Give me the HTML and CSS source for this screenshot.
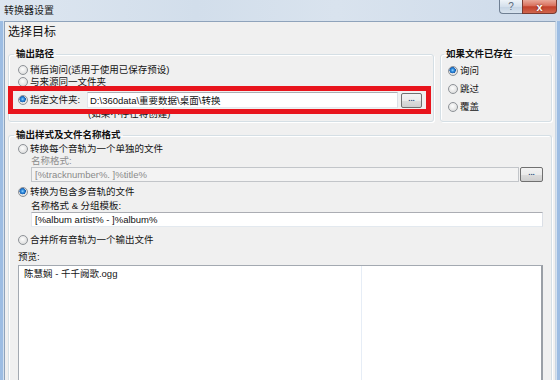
FILE: index.html
```html
<!DOCTYPE html>
<html lang="zh-CN">
<head>
  <meta charset="UTF-8">
  <meta name="viewport" content="width=device-width, initial-scale=1.0">
  <title>转换器设置</title>
  <link rel="stylesheet" href="styles.css">
</head>
<body>
  <div class="window">
    <div class="titlebar">
      <span class="title">转换器设置</span>
      <div class="caption">
        <span class="cap-btn help">?</span>
        <span class="cap-btn close">x</span>
      </div>
    </div>

    <div class="client">
      <h1>选择目标</h1>

      <div class="top-row">
        <fieldset class="group output-path">
          <legend>输出路径</legend>
          <label class="opt"><span class="radio"></span>稍后询问(适用于使用已保存预设)</label>
          <label class="opt"><span class="radio"></span>与来源同一文件夹</label>
          <div class="opt folder-row">
            <span class="radio on"></span>
            <span class="folder-label">指定文件夹:</span>
            <input class="field" type="text" value="D:\360data\重要数据\桌面\转换">
            <button class="browse">...</button>
            <span class="highlight"></span>
          </div>
          <div class="note">(如果不存在将创建)</div>
        </fieldset>

        <fieldset class="group if-exists">
          <legend>如果文件已存在</legend>
          <label class="opt"><span class="radio on"></span>询问</label>
          <label class="opt"><span class="radio"></span>跳过</label>
          <label class="opt"><span class="radio"></span>覆盖</label>
        </fieldset>
      </div>

      <fieldset class="group output-format">
        <legend>输出样式及文件名称格式</legend>
        <label class="opt"><span class="radio"></span>转换每个音轨为一个单独的文件</label>
        <div class="sub-label disabled">名称格式:</div>
        <div class="field-row">
          <input class="field small" type="text" value="[%tracknumber%. ]%title%" disabled>
          <button class="browse small">...</button>
        </div>

        <label class="opt multi"><span class="radio on"></span>转换为包含多音轨的文件</label>
        <div class="sub-label">名称格式 &amp; 分组模板:</div>
        <div class="field-row">
          <input class="field small" type="text" value="[%album artist% - ]%album%">
        </div>

        <label class="opt merge"><span class="radio"></span>合并所有音轨为一个输出文件</label>
        <div class="preview-label">预览:</div>
        <div class="preview">
          <div class="preview-col">陈慧娴 - 千千阙歌.ogg</div>
          <div class="preview-col rest"></div>
        </div>
      </fieldset>
    </div>
  </div>
</body>
</html>
```

FILE: styles.css
```css
* {
  box-sizing: border-box;
}
body {
  margin: 0;
  width: 560px;
  height: 380px;
  overflow: hidden;
  background: #a8c6e9;
  font-family: "Liberation Sans", "Noto Sans CJK SC", sans-serif;
  font-size: 9.5px;
  color: #141414;
}
.window {
  height: 100%;
  display: flex;
  flex-direction: column;
  background: linear-gradient(90deg, #9dbde3 0, #9dbde3 3px, #d3e1f0 3px, #d3e1f0 4px, transparent 4px),
              linear-gradient(270deg, #9dbde3 0, #9dbde3 3px, #d3e1f0 3px, #d3e1f0 4px, transparent 4px);
}

/* title bar */
.titlebar {
  height: 21px;
  flex: none;
  display: flex;
  justify-content: space-between;
  align-items: flex-start;
  padding: 0 3px 0 4px;
  background: linear-gradient(90deg, #dde6f0 0%, #d2deeb 35%, #d9e3ee 60%, #cddaea 100%);
}
.title {
  line-height: 21px;
  font-size: 10px;
  color: #222;
}
.caption {
  display: flex;
}
.cap-btn {
  height: 14px;
  display: flex;
  align-items: center;
  justify-content: center;
  border: 1px solid #6f7f93;
  border-top: none;
}
.help {
  width: 23px;
  border-radius: 0 0 0 4px;
  border-right: none;
  background: linear-gradient(#eef3f8, #d5e0ec 50%, #c4d3e3 51%, #d8e3ee);
  color: #59687a;
  font-size: 10px;
}
.close {
  width: 35px;
  border-radius: 0 0 4px 0;
  border-color: #7a3a30;
  background: linear-gradient(#e9a99a, #d9705c 45%, #c2402a 52%, #d0664e);
  color: #fff;
  font-weight: bold;
  font-size: 11px;
  text-shadow: 0 0 2px #5a1a10;
}

/* client area */
.client {
  flex: 1;
  min-height: 0;
  display: flex;
  flex-direction: column;
  margin: 0 4px;
  padding: 0 3px;
  background: #f0f0f0;
  border-top: 1px solid #8fa3bb;
  border-left: 1px solid #8fa3bb;
  border-right: 1px solid #c9d6e4;
}
h1 {
  margin: 3px 0 9px;
  font-size: 12px;
  line-height: 14px;
  font-weight: normal;
  color: #111;
}

/* group boxes */
.group {
  margin: 0;
  min-width: 0;
  border: 1px solid #d5dfe5;
  border-radius: 3px;
  box-shadow: inset 1px 1px 0 #fff, 1px 1px 0 #fff;
}
.group legend {
  margin-left: -4px;
  padding: 0 2px;
  line-height: 12px;
  font-weight: bold;
  color: #111;
}
.top-row {
  display: flex;
  gap: 6px;
}
.output-path {
  width: 426px;
  flex: none;
  padding: 4px 11px 1px 9px;
}
.if-exists {
  flex: 1;
  padding: 2px 4px 0 7px;
}
.if-exists .opt {
  height: 18px;
}
.opt {
  display: flex;
  align-items: center;
  height: 12px;
  line-height: 12px;
}
.radio {
  flex: none;
  width: 10px;
  height: 10px;
  margin-right: 2px;
  border-radius: 50%;
  border: 1px solid #8e9297;
  background: radial-gradient(circle at 45% 40%, #fdfdfd 0, #e6e6e6 55%, #cfd0d2 100%);
}
.radio.on {
  background: radial-gradient(circle at 45% 40%, #9fd6ff 0, #2f8ee0 1.5px, #1b5fae 3px, transparent 3.4px),
              radial-gradient(circle at 45% 40%, #fdfdfd 0, #e6e6e6 55%, #cfd0d2 100%);
}
.folder-row {
  position: relative;
  height: 16px;
  margin-top: 4px;
}
.folder-label {
  width: 57px;
  flex: none;
}
.field {
  height: 16px;
  flex: 1;
  min-width: 0;
  padding: 0 2px;
  font: inherit;
  color: #111;
  background: #fff;
  border: 1px solid;
  border-color: #abadb3 #dbdfe6 #e3e9ef #e2e3ea;
  outline: none;
}
.field.small {
  height: 15px;
  padding: 0 3px;
}
.field:disabled {
  background: #f3f3f3;
  color: #8a8a8a;
  border-color: #c2c5c9;
}
.browse {
  flex: none;
  width: 21px;
  height: 15px;
  margin-left: 3px;
  padding: 0 0 3px;
  border: 1px solid #707070;
  border-radius: 2px;
  background: linear-gradient(#f2f2f2 0%, #ebebeb 50%, #dddddd 51%, #cfcfcf 100%);
  font: bold 8px "Liberation Sans", sans-serif;
  color: #2b4a7a;
  line-height: 8px;
}
.browse.small {
  width: 23px;
  margin-left: 1px;
}
.highlight {
  position: absolute;
  left: -10px;
  top: -6px;
  right: -9px;
  bottom: -6px;
  border: 5px solid #e8141c;
}
.note {
  margin-left: 70px;
  line-height: 12px;
  height: 12px;
}

/* output format group */
.output-format {
  flex: 1;
  min-height: 0;
  display: flex;
  flex-direction: column;
  margin-top: 7px;
  padding: 1px 8px 0 9px;
  border-bottom: none;
  border-radius: 3px 3px 0 0;
}
.output-format .opt {
  height: 13px;
}
.output-format .opt.multi {
  height: 12px;
  margin-top: 4px;
}
.output-format .opt.merge {
  height: 12px;
  margin-top: 7px;
}
.sub-label {
  margin-left: 13px;
  line-height: 12px;
}
.opt.multi + .sub-label {
  margin-top: 2px;
}
.sub-label.disabled {
  color: #8d8d8d;
}
.field-row {
  display: flex;
  margin-left: 13px;
}
.preview-label {
  margin-top: 5px;
  line-height: 12px;
}
.preview {
  flex: 1;
  margin-top: 2px;
  display: flex;
  background: #fff;
  border: 1px solid #a3a9b1;
  border-right: 2px solid #9a9fa6;
  border-bottom: none;
}
.preview-col {
  width: 343px;
  padding: 2px 5px;
  line-height: 12px;
  border-right: 1px solid #e6edf6;
}
.preview-col.rest {
  flex: 1;
  border-right: none;
}
```
